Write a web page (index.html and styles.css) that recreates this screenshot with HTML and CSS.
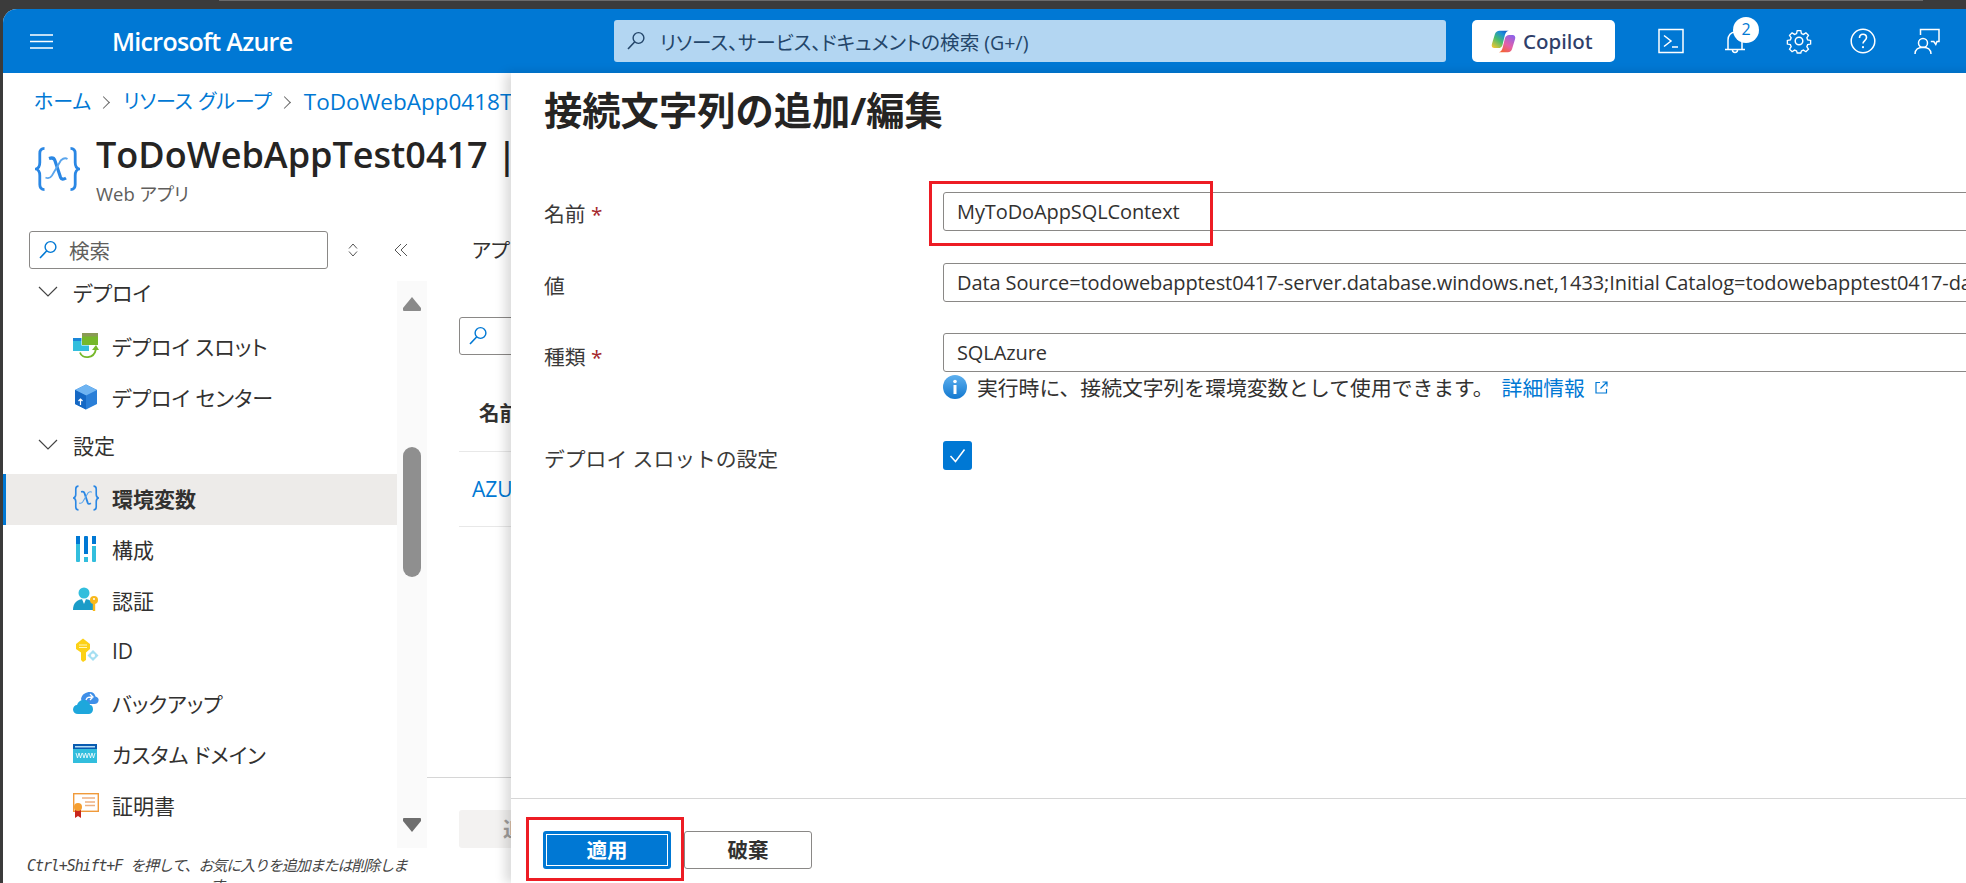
FILE: index.html
```html
<!DOCTYPE html>
<html lang="ja">
<head>
<meta charset="utf-8">
<title>接続文字列の追加/編集</title>
<link rel="stylesheet" href="styles.css">
</head>
<body>
<svg class="defs" width="0" height="0" aria-hidden="true">
  <symbol id="fx" viewBox="0 0 45 44">
    <path d="M9.500 1.400C6 1.400 4.800 3.200 4.800 6.500V15.500C4.800 19 3.500 21.300 1 22C3.500 22.700 4.800 25 4.800 28.500V37.500C4.800 40.800 6 42.600 9.500 42.600" fill="none" stroke="#2a87e4" stroke-width="2.800"/>
    <path d="M35.500 1.400C39 1.400 40.200 3.200 40.200 6.500V15.500C40.200 19 41.500 21.300 44 22C41.500 22.700 40.200 25 40.200 28.500V37.500C40.200 40.800 39 42.600 35.500 42.600" fill="none" stroke="#2a87e4" stroke-width="2.800"/>
    <path d="M14 11.500c3-1 5-.5 5.800 1.800l5.700 17c1 2.300 3 2.300 5.500.7" fill="none" stroke="#2a87e4" stroke-width="3.200"/>
    <path d="M32.500 12c-2-1.300-4-1-6.500 1.200L17 28.500c-1.800 2.800-4 3.200-6.500 2" fill="none" stroke="#5aa5ec" stroke-width="1.800"/>
  </symbol>
  <symbol id="lens" viewBox="0 0 20 20">
    <circle cx="12.500" cy="7" r="5.400" fill="none" stroke="currentColor" stroke-width="1.400"/>
    <path d="M8.600 11 2 18" stroke="currentColor" stroke-width="1.600"/>
  </symbol>
  <symbol id="chev" viewBox="0 0 20 11">
    <path d="M1 1l9 9 9-9" fill="none" stroke="#444" stroke-width="1.200"/>
  </symbol>
</svg>
<div class="chrome"><div class="chrome-line"></div></div>
<div class="window">
  <header class="topbar">
    <svg class="burger" viewBox="0 0 23 15" width="23" height="15"><path d="M0 1h23M0 7.500h23M0 14h23" stroke="#fff" stroke-width="1.600"/></svg>
    <div class="brand">Microsoft Azure</div>
    <div class="global-search">
      <svg class="lens" width="20" height="20"><use href="#lens"/></svg>
      <span>リソース、サービス、ドキュメントの検索 (G+/)</span>
    </div>
    <div class="copilot">
      <svg viewBox="0 0 26 24" width="25" height="23">
        <defs>
          <linearGradient id="cpa" x1=".1" y1="1" x2=".8" y2="0"><stop offset="0" stop-color="#f7c52e"/><stop offset=".45" stop-color="#49bd6c"/><stop offset=".8" stop-color="#1b8fd8"/><stop offset="1" stop-color="#1560c8"/></linearGradient>
          <linearGradient id="cpb" x1=".2" y1="1" x2=".8" y2="0"><stop offset="0" stop-color="#f4622c"/><stop offset=".45" stop-color="#e45fa8"/><stop offset="1" stop-color="#8c62ea"/></linearGradient>
        </defs>
        <path d="M9 .8h9.500c-2.300.5-3.500 2.300-4.100 4.700L12 15.300c-.5 2.200-2.200 3.600-4.500 3.600H3.600C1.200 18.900.200 17 .9 14.600L4 4.500C4.700 2.200 6.500.8 9 .8z" fill="url(#cpa)"/>
        <path d="M17.500 23.200H8c2.300-.5 3.500-2.300 4.100-4.700L14.500 8.700c.5-2.200 2.200-3.600 4.500-3.600h3.400c2.400 0 3.400 1.900 2.700 4.300L22 19.500c-.7 2.300-2 3.700-4.500 3.700z" fill="url(#cpb)"/>
      </svg>
      <span>Copilot</span>
    </div>
    <nav class="tools">
      <svg viewBox="0 0 26 26" width="26" height="26"><path d="M1 1.500h24v23H1z" fill="none" stroke="#fff" stroke-width="1.500"/><path d="M6 7.500l7 5.500-7 5.500M14 19h6" fill="none" stroke="#fff" stroke-width="1.500"/></svg>
      <div class="bell">
        <svg viewBox="0 0 26 26" width="26" height="26"><path d="M3 21.500h20M6 21V12c0-4.500 3-8 7-8s7 3.500 7 8v9" fill="none" stroke="#fff" stroke-width="1.500"/><path d="M10.500 22c0 3.200 5 3.200 5 0" fill="none" stroke="#fff" stroke-width="1.500"/></svg>
        <span class="badge">2</span>
      </div>
      <svg viewBox="0 0 26 26" width="26" height="26"><circle cx="13" cy="13" r="3.800" fill="none" stroke="#fff" stroke-width="1.500"/><path d="M11 1.500h4l.7 3.300 2.200.9 2.800-1.800 2.800 2.800-1.800 2.800.9 2.200 3.300.7v4l-3.300.7-.9 2.200 1.800 2.800-2.800 2.800-2.800-1.800-2.200.9-.7 2.300h-4l-.7-2.300-2.200-.9-2.800 1.800-2.800-2.800 1.800-2.800-.9-2.200-3.300-.7v-4l3.300-.7.9-2.200-1.800-2.800 2.800-2.800 2.800 1.800 2.200-.9z" transform="translate(1.300 1.300) scale(.9)" fill="none" stroke="#fff" stroke-width="1.500"/></svg>
      <svg viewBox="0 0 26 26" width="26" height="26"><circle cx="13" cy="13" r="11.800" fill="none" stroke="#fff" stroke-width="1.500"/><path d="M9.500 10c0-2.300 1.600-3.700 3.500-3.700s3.500 1.300 3.500 3.300c0 3-3.500 3-3.500 6" fill="none" stroke="#fff" stroke-width="1.600"/><circle cx="13" cy="19.200" r="1.100" fill="#fff"/></svg>
      <svg viewBox="0 0 26 26" width="26" height="26"><circle cx="9" cy="15" r="4.500" fill="none" stroke="#fff" stroke-width="1.500"/><path d="M1 26c0-4.500 3.500-6.800 8-6.800s8 2.300 8 6.800M6.500 7V1.500h18.500v12h-2l-1.200 3-2-3h-3" fill="none" stroke="#fff" stroke-width="1.500"/></svg>
    </nav>
  </header>
  <div class="content">
    <div class="blade">
      <div class="crumbs"><a>ホーム</a><i class="sep"></i><a>リソース グループ</a><i class="sep"></i><a class="crumb-app">ToDoWebApp0418T</a></div>
      <div class="head">
        <svg class="head-icon" width="45" height="44"><use href="#fx"/></svg>
        <div>
          <div class="title">ToDoWebAppTest0417 |</div>
          <div class="subtitle">Web アプリ</div>
        </div>
      </div>
      <div class="columns">
        <aside class="sidebar">
          <div class="side-tools">
            <div class="side-search">
              <svg class="blue" width="20" height="20"><use href="#lens"/></svg>
              <span>検索</span>
            </div>
            <svg class="updown" viewBox="0 0 12 16" width="12" height="16"><path d="M2 6.500 6 2l4 4.500M2 9.500 6 14l4-4.500" fill="none" stroke="#555" stroke-width="1"/></svg>
            <svg class="collapse" viewBox="0 0 14 14" width="14" height="14"><path d="M7 1 1 7l6 6M13 1 7 7l6 6" fill="none" stroke="#555" stroke-width="1"/></svg>
          </div>
          <div class="menu">
            <div class="menu-list">
              <div class="group first"><svg class="chev" width="20" height="11"><use href="#chev"/></svg>デプロイ</div>
              <div class="item">
                <svg viewBox="0 0 26 26" width="26" height="26"><rect y="5" width="16" height="13" fill="#32bedd"/><rect y="5" width="16" height="3" fill="#1a86d8"/><rect x="8.500" y="-.5" width="17" height="13" fill="#fff"/><rect x="9" y="0" width="16" height="12" fill="#76b82a"/><rect x="9" y="0" width="16" height="3.500" fill="#8a9a55"/><path d="M7 19.500c2 6.500 14 7 16-3.500" fill="none" stroke="#76b82a" stroke-width="1.800"/><path d="M19 17l4-5 3 5z" fill="#76b82a"/></svg>
                デプロイ スロット</div>
              <div class="item">
                <svg viewBox="0 0 26 26" width="26" height="26"><path d="M13 .5 24 6v14l-11 5.500L2 20V6z" fill="#2a7fd8"/><path d="M13 .5 24 6 13 11.500 2 6z" fill="#6fb4f2"/><path d="M2 6l11 5.500v14L2 20z" fill="#1568c4"/><path d="M7.500 21v-5M5.500 17l2-2 2 2" fill="none" stroke="#fff" stroke-width="1.200"/></svg>
                デプロイ センター</div>
              <div class="group"><svg class="chev" width="20" height="11"><use href="#chev"/></svg>設定</div>
              <div class="item active">
                <svg width="26" height="26"><use href="#fx"/></svg>
                環境変数</div>
              <div class="item">
                <svg viewBox="0 0 26 26" width="26" height="26"><rect x="3" y="0" width="4" height="26" rx="1" fill="#32bedd"/><rect x="3" y="0" width="4" height="8" fill="#0078d4"/><rect x="11" y="0" width="4" height="26" rx="1" fill="#0078d4"/><rect x="11" y="18" width="4" height="3" fill="#fff"/><rect x="11" y="21" width="4" height="5" fill="#32bedd"/><rect x="19" y="0" width="4" height="26" rx="1" fill="#32bedd"/><rect x="19" y="0" width="4" height="8" fill="#0078d4"/><rect x="19" y="8" width="4" height="2" fill="#fff"/></svg>
                構成</div>
              <div class="item">
                <svg viewBox="0 0 26 26" width="26" height="26"><circle cx="11" cy="6" r="5.500" fill="#32bedd"/><path d="M0 23c0-7 4-11 11-11s11 4 11 11z" fill="#1a9cc8"/><path d="M9 12h4l-2 5z" fill="#fff"/><circle cx="21" cy="13" r="4" fill="#f8b81c"/><rect x="19.800" y="15" width="2.400" height="9" fill="#f8b81c"/><circle cx="21" cy="12" r="1" fill="#fff"/></svg>
                認証</div>
              <div class="item">
                <svg viewBox="0 0 26 26" width="26" height="26"><path d="M10 .5 17 6v5l-4 3.500V22l-3 2-2-2v-7.500L3 11V6z" fill="#fcd116"/><path d="M6 7h8M6 9.500h8" stroke="#fff6b8" stroke-width="1"/><path d="M20 12l5.500 5.500L20 23l-5.500-5.500z" fill="#a5dff2"/><circle cx="20" cy="17.500" r="2" fill="#fff"/></svg>
                ID</div>
              <div class="item">
                <svg viewBox="0 0 26 26" width="26" height="26"><path d="M8 9c1-5 5-7 9-7 3 0 5 2 5.500 4.500C25 7 26 9 25.500 11c-.5 2-2 3-4 3H10z" fill="#3f8fe8"/><path d="M5 24c-3 0-5-2-5-4.500S2 15 4 15c1-3 3-5 6.500-5s6 2 6.500 5c2 0 3 2 3 4.500S18 24 15.500 24z" fill="#1ea7dc"/><path d="M13 10c1-3 3-3 6-3M17 4l3 3-3 3" fill="none" stroke="#fff" stroke-width="1.300"/></svg>
                バックアップ</div>
              <div class="item">
                <svg viewBox="0 0 26 26" width="26" height="26"><rect y="3" width="24" height="19" fill="#32bedd"/><rect y="3" width="24" height="5" fill="#0a5cb0"/><rect x="2" y="5" width="20" height="1.500" fill="#b8dcf5"/><path d="M3 12l1.500 5 1.500-5 1.500 5 1.500-5M9.500 12l1.500 5 1.500-5 1.500 5 1.500-5M16 12l1.500 5 1.500-5 1.500 5 1.500-5" fill="none" stroke="#fff" stroke-width=".8"/></svg>
                カスタム ドメイン</div>
              <div class="item">
                <svg viewBox="0 0 26 26" width="26" height="26"><rect x=".7" y="1.700" width="24.600" height="17.600" fill="#fff" stroke="#f09a3a" stroke-width="1.400"/><path d="M9 6h13M12 10h10M12 13.500h10" stroke="#eeb080" stroke-width="1.500"/><path d="M2 17v9l3-2 3 2v-9z" fill="#c8261c"/><circle cx="5" cy="15" r="4" fill="#f59e30"/></svg>
                証明書</div>
            </div>
            <div class="scrollbar">
              <svg viewBox="0 0 18 14" width="18" height="14"><path d="M9 0 0 11a2 2 0 0 0 1 3h16a2 2 0 0 0 1-3z" fill="#8a8a8a"/></svg>
              <div class="thumb"></div>
              <svg class="down" viewBox="0 0 18 14" width="18" height="14"><path d="M9 14 0 3a2 2 0 0 1 1-3h16a2 2 0 0 1 1 3z" fill="#6e6e6e"/></svg>
            </div>
          </div>
          <div class="hint">Ctrl+Shift+F を押して、お気に入りを追加または削除します</div>
        </aside>
        <main class="main">
          <div class="tabline">アプリ</div>
          <div class="filter"><svg class="blue" width="20" height="20"><use href="#lens"/></svg></div>
          <div class="th">名前</div>
          <div class="tr"><a>AZU</a></div>
          <div class="footer-line"></div>
          <div class="add-btn">追</div>
        </main>
      </div>
    </div>
    <section class="panel">
      <h1 class="panel-title">接続文字列の追加/編集</h1>
      <div class="form">
        <div class="row row-name">
          <label>名前 <em>*</em></label>
          <div class="field"><div class="input">MyToDoAppSQLContext</div><div class="mark mark-name"></div></div>
        </div>
        <div class="row row-value">
          <label>値</label>
          <div class="field"><div class="input">Data Source=todowebapptest0417-server.database.windows.net,1433;Initial Catalog=todowebapptest0417-da</div></div>
        </div>
        <div class="row row-type">
          <label>種類 <em>*</em></label>
          <div class="field">
            <div class="input">SQLAzure</div>
            <div class="info">
              <svg viewBox="0 0 24 24" width="24" height="24"><defs><linearGradient id="inf" x1="0" y1="0" x2="0" y2="1"><stop offset="0" stop-color="#5eb0ef"/><stop offset="1" stop-color="#1278cf"/></linearGradient></defs><circle cx="12" cy="12" r="12" fill="url(#inf)"/><rect x="10.500" y="10" width="3" height="9" fill="#fff"/><circle cx="12" cy="6.500" r="1.800" fill="#fff"/></svg>
              <span>実行時に、接続文字列を環境変数として使用できます。</span>
              <a>詳細情報</a>
              <svg class="ext" viewBox="0 0 13 13" width="13" height="13"><path d="M5 1.500H1v10.500h10.500V8M7.500 1H12v4.500M12 1 5.500 7.500" fill="none" stroke="#0078d4" stroke-width="1.200"/></svg>
            </div>
          </div>
        </div>
        <div class="row row-slot">
          <label>デプロイ スロットの設定</label>
          <div class="field"><div class="check"><svg viewBox="0 0 29 29" width="29" height="29"><path d="M7.500 15l5 5.500 9-12" fill="none" stroke="#fff" stroke-width="1.500"/></svg></div></div>
        </div>
      </div>
      <div class="panel-footer">
        <div class="apply-wrap">
          <button class="btn primary"><span>適用</span></button>
          <div class="mark mark-apply"></div>
        </div>
        <button class="btn secondary">破棄</button>
      </div>
    </section>
  </div>
</div>
</body>
</html>
```
FILE: styles.css
```css
* { box-sizing: border-box; }
html, body { margin: 0; height: 883px; overflow: hidden; }
body {
  background: #3b3b3b;
  padding-left: 3px;
  display: flex;
  flex-direction: column;
  font-family: "Open Sans", "Noto Sans CJK JP", sans-serif;
  color: #323130;
}
.defs { position: absolute; }
.blue { color: #0078d4; }
.chrome { height: 9px; flex: none; margin-left: -3px; }
.chrome-line { height: 1px; margin: 0 43px 0 219px; background: #6a6a6a; }
.window {
  flex: 1;
  min-height: 0;
  background: #fff;
  border-top-left-radius: 14px;
  overflow: hidden;
  display: flex;
  flex-direction: column;
}
.topbar {
  flex: none;
  height: 64px;
  background: #0078d4;
  display: flex;
  align-items: center;
  color: #fff;
}
.burger { margin-left: 27px; flex: none; }
.brand {
  margin-left: 59px;
  width: 502px;
  flex: none;
  font: 600 25px/30px "Open Sans", sans-serif;
  letter-spacing: -.7px;
  white-space: nowrap;
}
.global-search {
  width: 832px;
  flex: none;
  height: 42px;
  background: #b3d6f2;
  border-radius: 3px;
  display: flex;
  align-items: center;
  padding-left: 12px;
  gap: 14px;
  color: #24466a;
  font-size: 19.600px;
  font-feature-settings: "palt";
  white-space: nowrap;
}
.copilot {
  margin-left: 26px;
  width: 143px;
  flex: none;
  height: 42px;
  background: #fff;
  border-radius: 5px;
  display: flex;
  align-items: center;
  padding-left: 19px;
  gap: 7px;
  color: #2f3f6a;
  font: 500 20.500px/1 "Noto Sans", sans-serif;
}
.tools { display: flex; align-items: center; margin-left: 43px; gap: 38px; }
.tools svg { display: block; flex: none; }
.bell { position: relative; }
.badge {
  position: absolute;
  left: 11px;
  top: -11px;
  width: 26px;
  height: 26px;
  border-radius: 50%;
  background: #fff;
  color: #0078d4;
  font-size: 16px;
  line-height: 25px;
  text-align: center;
}
.content { position: relative; flex: 1; min-height: 0; }
.blade { height: 100%; display: flex; flex-direction: column; font-feature-settings: "palt"; }
.crumbs {
  flex: none;
  height: 58px;
  padding: 15px 0 0 31px;
  display: flex;
  align-items: flex-start;
  font-size: 20px;
  line-height: 28px;
  color: #0078d4;
  white-space: nowrap;
}
.crumb-app { font-size: 22.500px; }
.sep {
  width: 9px;
  height: 9px;
  border-top: 1.200px solid #666;
  border-right: 1.200px solid #666;
  transform: rotate(45deg);
  margin: 10px 15px 0 8px;
}
.head { flex: none; height: 100px; padding-left: 32px; display: flex; gap: 16px; align-items: flex-start; white-space: nowrap; }
.head-icon { margin-top: 16px; flex: none; }
.title { font-size: 36px; font-weight: 600; line-height: 44px; color: #252423; margin-top: 2px; }
.subtitle { font-size: 18.500px; line-height: 24px; color: #605e5c; margin-top: 5px; }
.columns { flex: 1; min-height: 0; display: flex; }
.sidebar { width: 424px; flex: none; display: flex; flex-direction: column; }
.side-tools { height: 38px; flex: none; display: flex; align-items: center; padding-left: 26px; }
.side-search {
  width: 299px;
  flex: none;
  height: 38px;
  border: 1px solid #8a8886;
  border-radius: 3px;
  display: flex;
  align-items: center;
  padding-left: 8px;
  gap: 11px;
  font-size: 20.500px;
  color: #605e5c;
}
.updown { margin-left: 19px; flex: none; }
.collapse { margin-left: 35px; flex: none; }
.menu { flex: none; height: 567px; margin-top: 12px; display: flex; }
.menu-list { flex: none; width: 394px; }
.group, .item { display: flex; align-items: center; font-size: 21px; white-space: nowrap; padding-bottom: 3px; }
.group { height: 45px; margin-bottom: 5px; padding-left: 35px; gap: 15px; }
.group.first { height: 22px; margin-bottom: 18.500px; padding-bottom: 1px; }
.item { height: 51.200px; padding-left: 70px; gap: 13px; }
.item svg { flex: none; }
.item.active { background: #edebe9; border-left: 3px solid #0078d4; padding-left: 67px; font-weight: 700; height: 51px; }
.chev { flex: none; }
.scrollbar { flex: none; width: 30px; background: #fafafa; padding: 16px 6px 0; display: flex; flex-direction: column; }
.scrollbar svg { display: block; flex: none; }
.thumb { width: 18px; height: 130px; background: #8f8f8f; border-radius: 9px; margin-top: 136px; flex: none; }
.down { margin-top: 241px; }
.hint {
  font: italic 15px/20px "DejaVu Sans Mono", "Noto Sans CJK JP", monospace;
  color: #444;
  text-align: center;
  padding: 8px 14px 0 18px;
  letter-spacing: -1.100px;
}
.main { flex: 1; min-width: 0; position: relative; display: flex; flex-direction: column; overflow: hidden; padding-left: 32px; }
.tabline { height: 38px; line-height: 38px; font-size: 20.500px; margin-left: 13px; white-space: nowrap; flex: none; }
.filter { width: 200px; height: 38px; margin-top: 48px; border: 1px solid #8a8886; border-radius: 3px; padding: 8px; flex: none; }
.filter svg { display: block; }
.th { height: 97px; padding: 44px 0 0 20px; font-weight: 700; font-size: 20.500px; line-height: 28px; border-bottom: 1px solid #e8e8e8; flex: none; white-space: nowrap; }
.tr { height: 75px; line-height: 75px; padding-left: 13px; font-size: 21px; color: #0078d4; border-bottom: 1px solid #e8e8e8; white-space: nowrap; flex: none; }
.footer-line { height: 1px; background: #d6d6d6; margin: 250px 0 0 -32px; flex: none; }
.add-btn { height: 38px; margin-top: 32px; background: #f3f2f1; border-radius: 3px; color: #a19f9d; font-size: 20.500px; font-weight: 700; line-height: 38px; padding-left: 44px; width: 200px; white-space: nowrap; flex: none; }
.panel {
  position: absolute;
  left: 508px;
  top: 0;
  bottom: 0;
  width: 1700px;
  background: #fff;
  box-shadow: -6px 0 10px rgba(0,0,0,.14);
  display: flex;
  flex-direction: column;
}
.panel-title {
  margin: 0;
  padding-left: 33px;
  height: 108px;
  font-size: 38.300px;
  font-weight: 700;
  line-height: 74px;
  color: #252423;
  flex: none;
}
.form { flex: 1; }
.row { display: flex; }
.row label { width: 432px; flex: none; font-size: 20.800px; line-height: 28px; padding-left: 33px; color: #3b3a39; }
.row em { font-style: normal; color: #a4262c; }
.row-name { height: 71px; margin-top: 11px; }
.row-name label { padding-top: 8px; }
.row-value { height: 70px; }
.row-value label { padding-top: 9px; }
.row-type { height: 108px; }
.row-type label { padding-top: 10px; }
.row-slot label { padding-top: 4px; }
.field { width: 1300px; position: relative; }
.input {
  height: 39px;
  border: 1px solid #8a8886;
  border-radius: 3px;
  padding-left: 13px;
  font-size: 20px;
  letter-spacing: -.1px;
  line-height: 37px;
  color: #323130;
  white-space: nowrap;
  overflow: hidden;
}
.info { display: flex; align-items: center; margin-top: 3px; height: 24px; font-size: 20.800px; white-space: nowrap; }
.info svg { flex: none; }
.info span { margin-left: 10px; }
.info a { color: #0078d4; margin-left: 8px; }
.ext { margin-left: 10px; }
.check { width: 29px; height: 29px; background: #0078d4; border-radius: 3px; }
.check svg { display: block; }
.mark { position: absolute; border: 3px solid #ed1c24; pointer-events: none; }
.mark-name { left: -14px; top: -11px; width: 284px; height: 65px; }
.panel-footer { flex: none; height: 85px; border-top: 1px solid #d6d6d6; padding: 32px 0 0 32px; display: flex; gap: 13px; align-items: flex-start; }
.apply-wrap { position: relative; }
.mark-apply { left: -17px; top: -14px; width: 158px; height: 64px; }
.btn {
  display: block;
  width: 128px;
  height: 38px;
  border-radius: 3px;
  font: 700 20.500px/1 "Open Sans", "Noto Sans CJK JP", sans-serif;
  padding: 0;
}
.primary { background: #0078d4; border: 0; color: #fff; padding: 3px; }
.primary span { display: block; height: 100%; border: 1px solid #fff; line-height: 30px; }
.secondary { background: #fff; border: 1px solid #8a8886; color: #323130; }
```
